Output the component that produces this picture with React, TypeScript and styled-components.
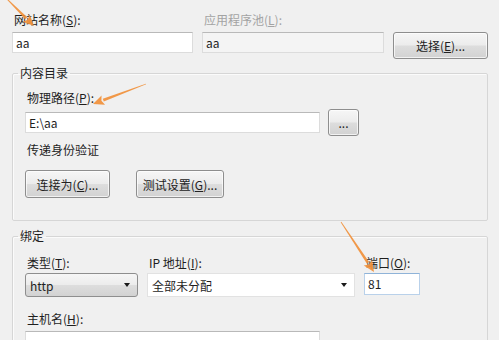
import React from 'react';
import styled, { createGlobalStyle } from 'styled-components';

const GlobalStyle = createGlobalStyle`
  html, body {
    margin: 0;
    padding: 0;
    background: #f0f0f0;
  }
  body {
    font-family: "Noto Sans CJK SC", "Liberation Sans", sans-serif;
    font-size: 12px;
    color: #1e1e1e;
  }
`;

const Page = styled.div`
  position: relative;
  width: 499px;
  height: 340px;
  overflow: hidden;
  box-sizing: border-box;
  padding: 12px 11px 0 12px;
`;

const TopRow = styled.div`
  display: grid;
  grid-template-columns: 181px 182px 95px;
  column-gap: 9px;
  align-items: end;
`;

const Field = styled.div`
  display: flex;
  flex-direction: column;
`;

const Label = styled.div<{ $disabled?: boolean }>`
  line-height: 16px;
  height: 16px;
  margin-left: 2px;
  white-space: nowrap;
  color: ${(p) => (p.$disabled ? '#a3a3a3' : '#1e1e1e')};
`;

const TextBox = styled.div<{ $w?: number; $disabled?: boolean; $focus?: boolean }>`
  box-sizing: border-box;
  width: ${(p) => (p.$w ? `${p.$w}px` : '100%')};
  height: 21px;
  line-height: 19px;
  padding: 0 3px;
  background: ${(p) => (p.$disabled ? '#f4f4f4' : '#ffffff')};
  border: 1px solid ${(p) => (p.$focus ? '#b9d1ea' : '#dcdcdc')};
  border-top-color: ${(p) => (p.$focus ? '#8fb3d8' : '#b9b9b9')};
  white-space: nowrap;
  overflow: hidden;
`;

const Button = styled.div<{ $w: number; $h?: number }>`
  box-sizing: border-box;
  width: ${(p) => p.$w}px;
  height: ${(p) => p.$h ?? 28}px;
  display: flex;
  align-items: center;
  justify-content: center;
  border: 1px solid #8e8e8e;
  border-radius: 3px;
  background: linear-gradient(#f6f6f6 0%, #ececec 48%, #dddddd 52%, #d2d2d2 100%);
  box-shadow: inset 0 0 0 1px rgba(255, 255, 255, 0.7);
  white-space: nowrap;
  color: #222;
`;

const Group = styled.fieldset<{ $top: number; $bottom: number }>`
  margin: 0;
  margin-top: ${(p) => p.$top}px;
  padding: 0 12px ${(p) => p.$bottom}px 12px;
  width: 476px;
  box-sizing: border-box;
  border: 1px solid #d6d6d6;
  border-radius: 2px;
  box-shadow: inset 1px 1px 0 #fbfbfb;
`;

const Legend = styled.legend`
  margin-left: -7px;
  padding: 0 2px;
  line-height: 16px;
  color: #1e1e1e;
`;

const Row = styled.div<{ $gap: number; $top?: number }>`
  display: flex;
  align-items: center;
  gap: ${(p) => p.$gap}px;
  margin-top: ${(p) => p.$top ?? 0}px;
`;

const SectionLabel = styled(Label)<{ $top: number }>`
  margin-top: ${(p) => p.$top}px;
`;

const Combo = styled.div<{ $w: number; $plain?: boolean }>`
  box-sizing: border-box;
  width: ${(p) => p.$w}px;
  height: 24px;
  display: flex;
  align-items: center;
  justify-content: space-between;
  padding: 0 7px 0 4px;
  border: 1px solid ${(p) => (p.$plain ? '#e2e2e2' : '#8e8e8e')};
  border-radius: ${(p) => (p.$plain ? 0 : 3)}px;
  background: ${(p) =>
    p.$plain ? '#ffffff' : 'linear-gradient(#f6f6f6 0%, #ececec 48%, #dddddd 52%, #d2d2d2 100%)'};
  white-space: nowrap;
`;

const Caret = styled.span`
  width: 0;
  height: 0;
  border-left: 3.5px solid transparent;
  border-right: 3.5px solid transparent;
  border-top: 4px solid #1a1a1a;
`;

const Column = styled.div<{ $w: number }>`
  width: ${(p) => p.$w}px;
  display: flex;
  flex-direction: column;
  gap: 2px;
`;

const Overlay = styled.svg`
  position: absolute;
  left: 0;
  top: 0;
  pointer-events: none;
`;

type Pt = [number, number];

const Arrow: React.FC<{ from: Pt; to: Pt }> = ({ from, to }) => {
  const dx = to[0] - from[0];
  const dy = to[1] - from[1];
  const len = Math.hypot(dx, dy);
  const ux = dx / len;
  const uy = dy / len;
  const nx = -uy;
  const ny = ux;
  const headLen = 11;
  const headW = 5;
  const bx = to[0] - ux * headLen;
  const by = to[1] - uy * headLen;
  const shaft = [
    [from[0] + nx * 0.4, from[1] + ny * 0.4],
    [bx + nx * 1.4, by + ny * 1.4],
    [bx - nx * 1.4, by - ny * 1.4],
    [from[0] - nx * 0.4, from[1] - ny * 0.4],
  ];
  const head = [
    [to[0], to[1]],
    [bx + nx * headW, by + ny * headW],
    [bx + ux * 2, by + uy * 2],
    [bx - nx * headW, by - ny * headW],
  ];
  const pts = (a: number[][]) => a.map((p) => p.join(',')).join(' ');
  return (
    <g fill="#f2913a" opacity={0.92}>
      <polygon points={pts(shaft)} />
      <polygon points={pts(head)} />
    </g>
  );
};

const Key: React.FC<{ k: string }> = ({ k }) => (
  <>
    (<u>{k}</u>)
  </>
);

export default function App() {
  return (
    <>
      <GlobalStyle />
      <Page>
        <TopRow>
          <Field>
            <Label>网站名称<Key k="S" />:</Label>
            <TextBox style={{ marginTop: 4 }}>aa</TextBox>
          </Field>
          <Field>
            <Label $disabled>应用程序池<Key k="L" />:</Label>
            <TextBox $disabled style={{ marginTop: 4 }}>aa</TextBox>
          </Field>
          <Button $w={95} $h={27} style={{ marginBottom: -6 }}>
            选择<Key k="E" />...
          </Button>
        </TopRow>

        <Group $top={12} $bottom={22}>
          <Legend>内容目录</Legend>
          <SectionLabel $top={9}>物理路径<Key k="P" />:</SectionLabel>
          <Row $gap={8} $top={3}>
            <TextBox $w={295}>E:\aa</TextBox>
            <Button $w={31} $h={27}>...</Button>
          </Row>
          <SectionLabel $top={6}>传递身份验证</SectionLabel>
          <Row $gap={26} $top={12}>
            <Button $w={85}>连接为<Key k="C" />...</Button>
            <Button $w={88}>测试设置<Key k="G" />...</Button>
          </Row>
        </Group>

        <Group $top={7} $bottom={12}>
          <Legend>绑定</Legend>
          <Row $gap={9} $top={11} style={{ alignItems: 'flex-start' }}>
            <Column $w={113}>
              <Label>类型<Key k="T" />:</Label>
              <Combo $w={113}>
                <span>http</span>
                <Caret />
              </Combo>
            </Column>
            <Column $w={208}>
              <Label>IP 地址<Key k="I" />:</Label>
              <Combo $w={208} $plain>
                <span>全部未分配</span>
                <Caret />
              </Combo>
            </Column>
            <Column $w={56}>
              <Label>端口<Key k="O" />:</Label>
              <TextBox $w={56} $focus style={{ height: 22 }}>81</TextBox>
            </Column>
          </Row>
          <SectionLabel $top={14}>主机名<Key k="H" />:</SectionLabel>
          <TextBox $w={295} style={{ marginTop: 4 }} />
        </Group>

        <Overlay width={499} height={340} viewBox="0 0 499 340">
          <Arrow from={[6, -2]} to={[34, 26]} />
          <Arrow from={[146, 84]} to={[93, 104]} />
          <Arrow from={[341, 222]} to={[374, 272]} />
        </Overlay>
      </Page>
    </>
  );
}
